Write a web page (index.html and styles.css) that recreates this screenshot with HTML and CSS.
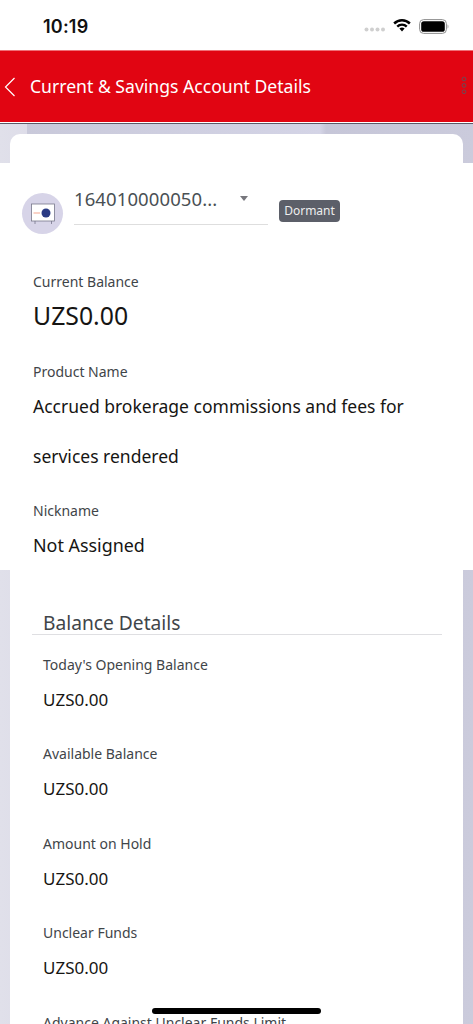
FILE: index.html
```html
<!DOCTYPE html>
<html lang="en">
<head>
<meta charset="utf-8">
<title>Current &amp; Savings Account Details</title>
<link rel="stylesheet" href="styles.css">
</head>
<body>
<div class="status">
  <span class="time">10:19</span>
  <div class="status-icons">
    <svg class="signal" width="21" height="5" viewBox="0 0 21 5"><circle cx="2.5" cy="2.5" r="2"/><circle cx="8" cy="2.5" r="2"/><circle cx="13.5" cy="2.5" r="2"/><circle cx="19" cy="2.5" r="2"/></svg>
    <svg class="wifi" width="18" height="14" viewBox="0 0 18 14"><path d="M0.3 4.6 A12.5 12.5 0 0 1 17.7 4.6 L16 6.4 A10 10 0 0 0 2 6.4 Z"/><path d="M3.4 7.7 A8 8 0 0 1 14.6 7.7 L12.9 9.4 A5.6 5.6 0 0 0 5.1 9.4 Z"/><path d="M6.4 10.6 A3.8 3.8 0 0 1 11.6 10.6 L9 13.4 Z"/></svg>
    <svg class="battery" width="30" height="15" viewBox="0 0 30 15"><rect x="0.6" y="0.6" width="26.8" height="13.8" rx="4" fill="none" stroke="#8e8e8e" stroke-width="1"/><rect x="2.2" y="2.2" width="23.6" height="10.6" rx="2.6" fill="#000"/><path d="M28.6 5.5 C29.6 5.8 29.6 9.2 28.6 9.5 Z" fill="#8e8e8e"/></svg>
  </div>
</div>

<header class="topbar">
  <svg class="back" width="12" height="20" viewBox="0 0 12 20"><path d="M10.5 1 L1.5 10 L10.5 19" fill="none" stroke="#fff" stroke-width="1.2"/></svg>
  <h1 class="title">Current &amp; Savings Account Details</h1>
  <svg class="more" width="6" height="19" viewBox="0 0 6 19"><circle cx="3" cy="3" r="1.9"/><circle cx="3" cy="9.4" r="1.9"/><circle cx="3" cy="15.8" r="1.9"/></svg>
</header>

<main class="page">
  <div class="card">
    <section class="band">
      <div class="account">
        <div class="avatar">
          <svg width="26" height="24" viewBox="0 0 26 24"><rect x="1.5" y="2" width="23" height="17" fill="#fff" stroke="#77778a" stroke-width="0.8"/><path d="M3.5 11 H10" stroke="#f3a58f" stroke-width="1"/><circle cx="16" cy="11" r="4.5" fill="#2a3b84"/><path d="M5 19 V22 M21.5 19 V22" stroke="#77778a" stroke-width="0.8"/></svg>
        </div>
        <div class="picker">
          <span class="acct-no">164010000050...</span>
          <span class="caret"></span>
        </div>
        <span class="badge">Dormant</span>
      </div>
      <div class="summary">
        <div class="label first">Current Balance</div>
        <div class="big">UZS0.00</div>
        <div class="label second">Product Name</div>
        <div class="product">Accrued brokerage commissions and fees for services rendered</div>
        <div class="label third">Nickname</div>
        <div class="value-lg">Not Assigned</div>
      </div>
    </section>

    <section class="details">
      <h2 class="section-title">Balance Details</h2>
      <div class="row"><div class="row-label">Today's Opening Balance</div><div class="row-value">UZS0.00</div></div>
      <div class="row"><div class="row-label">Available Balance</div><div class="row-value">UZS0.00</div></div>
      <div class="row"><div class="row-label">Amount on Hold</div><div class="row-value">UZS0.00</div></div>
      <div class="row"><div class="row-label">Unclear Funds</div><div class="row-value">UZS0.00</div></div>
      <div class="row"><div class="row-label">Advance Against Unclear Funds Limit</div></div>
    </section>
  </div>
</main>
<div class="home-indicator"></div>
</body>
</html>
```
FILE: styles.css
```css
* { box-sizing: border-box; }
html, body { margin: 0; padding: 0; height: 1024px; overflow: hidden; }
body { font-family: "Noto Sans", "Open Sans", sans-serif; background: #fff; color: #161513; position: relative; }

.status { height: 50px; background: #fff; display: flex; align-items: center; justify-content: space-between; padding: 2px 24px 0 43px; }
.time { font-family: Inter, "Liberation Sans", sans-serif; font-size: 18px; font-weight: 600; color: #111; letter-spacing: 0.2px; }
.status-icons { display: flex; align-items: center; gap: 8px; }
.signal { fill: #cfcfcf; margin-top: 7px; }
.wifi { fill: #000; margin-bottom: 2px; }

.topbar { height: 73px; background: #e10512; border-top: 1px solid #ef7077; border-bottom: 1px solid #fff; box-shadow: 0 1px 0 #5a5a68; display: flex; align-items: center; padding: 0 6px 0 4px; position: relative; }
.back { flex: none; margin-right: 14px; }
.title { flex: 1; margin: 0 0 2px; font-size: 17.6px; font-weight: 400; color: #fff; }
.more { flex: none; fill: none; stroke: #6e4a55; stroke-width: 1; margin-bottom: 3px; }

.page { height: 901px; padding: 11px 10px 0; background: linear-gradient(90deg, #e0e0ea 0, #dedde9 27px, #c9c9da 27px, #d4d4e6 320px, #c6c6d8 326px, #cbcbdc 100%); }
.card { background: #fff; border-radius: 10px 10px 0 0; height: 100%; padding-top: 29px; }
.band { margin: 0 -10px; background: #fff; height: 407px; }

.account { display: flex; align-items: flex-start; padding: 0 0 0 22px; }
.avatar { width: 41px; height: 41px; border-radius: 50%; background: #d7d4e8; display: flex; align-items: center; justify-content: center; margin-top: 30px; flex: none; }
.picker { width: 194px; height: 48px; margin: 14px 0 0 11px; border-bottom: 1px solid #dedede; display: flex; padding-top: 9px; position: relative; }
.acct-no { font-size: 18.5px; color: #4a5054; line-height: 26px; letter-spacing: 0.1px; }
.caret { position: absolute; right: 20px; top: 19px; width: 0; height: 0; border-left: 4.5px solid transparent; border-right: 4.5px solid transparent; border-top: 5px solid #77777d; }
.badge { margin: 37px 0 0 11px; height: 22px; width: 61px; text-align: center; line-height: 22px; background: #5c5f69; color: #eee; font-size: 12px; border-radius: 4px; }

.summary { padding: 0 0 0 33px; }
.label { font-size: 14px; color: #3f4549; line-height: 20px; }
.label.first { margin-top: 38px; }
.big { font-size: 24.8px; line-height: 34px; color: #161513; margin-top: 6px; }
.label.second { margin-top: 30px; }
.product { font-size: 17.5px; line-height: 50px; width: 400px; margin-top: -1px; }
.label.third { margin-top: 20px; }
.value-lg { font-size: 17.9px; line-height: 26px; margin-top: 11px; }

.details { padding: 0 21px 0 22px; }
.section-title { margin: 40px 0 0; padding: 0 0 0 11px; font-size: 19.2px; font-weight: 400; line-height: 25px; color: #3f4549; border-bottom: 1px solid #dfdfe2; height: 25px; }
.row { padding-left: 11px; height: 89.4px; }
.section-title + .row { margin-top: 20px; }
.row-label { font-size: 14px; line-height: 20px; color: #3f4549; }
.row-value { font-size: 17px; line-height: 24px; margin-top: 13px; color: #161513; }

.home-indicator { position: absolute; left: 152px; top: 1008px; width: 169px; height: 6px; border-radius: 3px; background: #000; }
```
